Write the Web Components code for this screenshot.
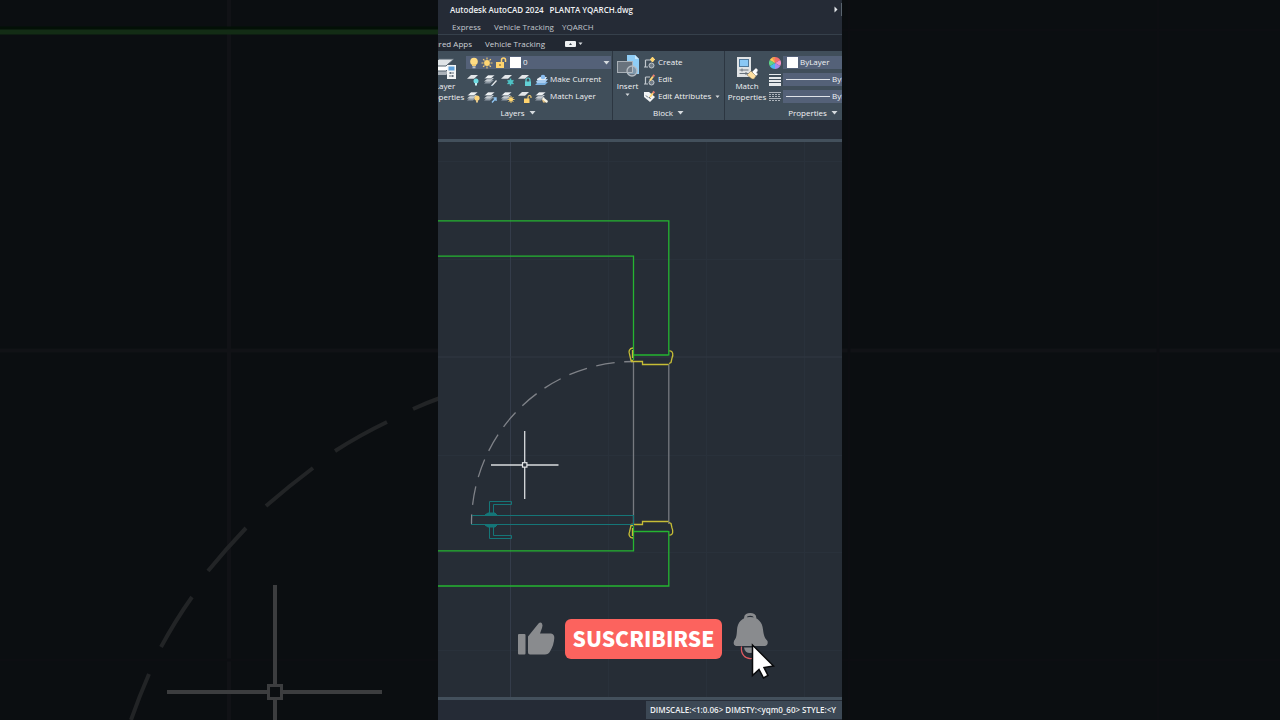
<!DOCTYPE html>
<html lang="en">
<head>
<meta charset="utf-8">
<title>Autodesk AutoCAD 2024 - PLANTA YQARCH.dwg</title>
<style>
  html, body { margin: 0; background: #0b0e11; }
  body { font: 8px/11px "Open Sans", "Noto Sans", sans-serif; color: #f0f2f4; }
</style>
</head>
<body>
<video-stage>
  <cad-window>
    <title-bar slot="top"></title-bar>
    <menu-tabs slot="top"></menu-tabs>
    <ribbon-tabs slot="top"></ribbon-tabs>
    <cad-ribbon slot="top">
      <layers-panel></layers-panel>
      <block-panel></block-panel>
      <properties-panel></properties-panel>
    </cad-ribbon>
    <plan-canvas><subscribe-bar></subscribe-bar></plan-canvas>
    <status-bar slot="bottom">DIMSCALE:&lt;1:0.06&gt; DIMSTY:&lt;yqm0_60&gt; STYLE:&lt;Y</status-bar>
  </cad-window>
</video-stage>

<script>
const define = (name, html) => {
  const tpl = document.createElement('template');
  tpl.innerHTML = html;
  customElements.define(name, class extends HTMLElement {
    constructor() {
      super();
      this.attachShadow({ mode: 'open' }).append(tpl.content.cloneNode(true));
    }
  });
};

/* ---------- icons ---------- */
const sheets = `<path fill="#8d98a3" d="M1 10.500l4-3.500h6l-4 3.500z"/><path fill="#c4cad0" d="M1 8.500l4-3.500h6l-4 3.500z"/><path fill="#eef1f3" stroke="#404e5a" stroke-width=".6" d="M1 5.700L5 2h7L8 5.700z"/>`;
const sheet = `<path fill="#e3e6e9" d="M1 5.800L5 2h7L8 5.800z"/>`;
const padlock = (c) => `<path d="M9 9V7a2 2 0 0 1 4 0v2" fill="none" stroke="${c}" stroke-width="1.200"/><rect x="8" y="8.500" width="6" height="4.500" fill="${c}"/>`;
const ICONS = {
  bulb: [14, 14, `<circle cx="8" cy="5.500" r="3.800" fill="#ffdc83"/><path fill="#f4cd71" d="M6 8h4v2H6z"/><path fill="#b9bec4" d="M6.500 10.300h3v2h-3z"/>`],
  sun: [14, 14, `<circle cx="7" cy="7" r="2.900" fill="#ffd673"/><path stroke="#f5cd70" stroke-width="1.100" d="M7 1.500v2M7 10.500v2M1.500 7h2M10.500 7h2M3.100 3.100l1.400 1.400M9.500 9.500l1.400 1.400M3.100 10.900l1.400-1.400M9.500 4.500l1.400-1.400"/>`],
  unlock: [14, 14, `<path d="M7.500 7V4a2 2 0 0 1 4 0v2" fill="none" stroke="#ffd36e" stroke-width="1.500"/><rect x="2" y="6" width="8" height="6" fill="#ffd36e"/><path stroke="#6b5a35" d="M6 8v2"/>`],
  white: [14, 14, `<rect x="2" y="1" width="11" height="11" fill="#fff"/>`],
  layOff: [16, 14, sheet + `<circle cx="10" cy="8" r="2.500" fill="#6fdbe2"/><path fill="#c9edf0" d="M9 10h2v2.500H9z"/>`],
  layIso: [16, 14, sheets + `<path stroke="#e5e8ea" stroke-width="1.300" d="M9 12.500l4.500-5"/><path stroke="#9fb6ca" d="M8 12.500h2"/>`],
  layFreeze: [16, 14, sheet + `<circle cx="10.500" cy="9" r="2.300" fill="#46b3b7"/><path stroke="#4fc3c6" stroke-width="1.500" d="M10.500 5.500v7M7.500 7.300l6 3.500M7.500 10.800l6-3.500"/>`],
  layLock: [16, 14, sheet + padlock('#62d0d6')],
  layCurrent: [16, 14, `<path fill="#78aede" d="M1 12l3-3h10l-3 3z"/><path fill="#a9cdf0" d="M2 8.500L5 6h9l-3 4H3z"/><path fill="#e7eef4" d="M3 6l3-2h7l-2 3H3z"/><circle cx="9" cy="4" r="2.300" fill="#8abdf0"/>`],
  layOn: [16, 14, sheets + `<circle cx="11" cy="8" r="2.600" fill="#ffd67a"/><path fill="#e6c789" d="M10 10h2v2.500h-2z"/>`],
  layUniso: [16, 14, sheets + `<path stroke="#8fc4f2" stroke-width="1.400" d="M9 12.500l4-4.500M10.500 8H13v3"/>`],
  layThaw: [16, 14, sheets + `<circle cx="11" cy="9.500" r="2" fill="#ffd673"/><path stroke="#ffd673" stroke-width=".9" d="M11 6v7M7.500 9.500h7M8.500 7l5 5M8.500 12l5-5"/>`],
  layUnlock: [16, 14, sheet + `<path d="M11 9V7a1.500 1.500 0 0 1 3 0v1" fill="none" stroke="#ffd36e" stroke-width="1.100"/><rect x="7" y="8.500" width="5.500" height="4.500" fill="#ffd36e"/>`],
  layMatch: [16, 14, sheets + `<path fill="#f7f4e6" d="M9 7l5 4-1 2-5-3z"/><path fill="#e8c27c" d="M8 9l4 3.500H9z"/>`],
  layerProps: [30, 25, `<path fill="#aab1b8" d="M1 20l7-6h15l-7 6z"/><path fill="#fff" stroke="#53606c" d="M1 16l8-6h14l-7 6z"/><path fill="#dfe3e6" stroke="#53606c" d="M1 11l8-7h15l-8 7z"/><rect x="17" y="10" width="9" height="14" fill="#f3f5f6"/><rect x="18.500" y="11.500" width="6" height="4" fill="#5e9fd8"/><path stroke="#67737e" d="M19 18h5M19 21h5M20.500 17v2M22.500 20v2"/>`],
  insert: [24, 25, `<path fill="#8fcdf5" d="M11 0h8l4 4v15H11z"/><path fill="#c7e7fb" d="M19 0v4h4z"/><rect x="1.500" y="6.500" width="15" height="11" fill="#69737d" stroke="#a9b0b7"/><circle cx="16" cy="16" r="5" fill="#77828d" fill-opacity=".7" stroke="#b5bcc3" stroke-width="1.300"/><path fill="none" stroke="#b5bcc3" d="M11.500 17.500h5v-6"/>`],
  create: [16, 14, `<path fill="none" stroke="#c2c8ce" stroke-width="1.200" d="M3.500 4v6.500M3.500 4H9M2 11h4"/><circle cx="9.500" cy="9.500" r="2.500" fill="#717c87" stroke="#c2c8ce"/><path stroke="#ffd673" stroke-width="1.200" d="M10.500 1v5M8 3.500h5M9 2l3 3M12 2L9 5"/>`],
  edit: [16, 14, `<path fill="none" stroke="#c2c8ce" stroke-width="1.200" d="M3.500 4v6.500M3.500 4H8M2 11h4"/><circle cx="9.500" cy="9.500" r="2.500" fill="#717c87" stroke="#c2c8ce"/><path stroke="#ffd673" stroke-width="2" d="M8 7.500l3-4"/><path stroke="#ef7d72" stroke-width="2" d="M11 3.500L12.300 2"/>`],
  editAttr: [16, 14, `<path fill="#f1f3f4" d="M2 2h5l6 5-5 5-6-5z"/><path stroke="#58646f" d="M4 5.500l2 2M7 7l1.500 2"/><path stroke="#ffd673" stroke-width="2" d="M8 7l3-4"/><path stroke="#ef7d72" stroke-width="2" d="M11 3L12.300 1.500"/>`],
  matchProps: [24, 25, `<rect x="2" y="2" width="14" height="20" fill="#e0e3e5"/><rect x="4.500" y="4.500" width="9" height="7" fill="#8ac8f5" stroke="#4f7798"/><path stroke="#68737d" d="M4.500 15h9M4.500 18.500h9M7 13.500v3M11 17v3"/><path fill="#fff" stroke="#8a8d90" stroke-width=".5" d="M17 17l4-4 2 2-1.500 3 1.500 1-3 3z"/><path fill="#ffe0a0" stroke="#6d6553" stroke-width=".5" d="M12 20l4-4 5 5-2 3h-2z"/>`],
  wheel: [12, 14, `<g transform="translate(6 7)"><path fill="#f46d6d" d="M0 0V-6A6 6 0 0 1 5.200-3z"/><path fill="#f58fc5" d="M0 0L5.200-3A6 6 0 0 1 5.200 3z"/><path fill="#a58af0" d="M0 0L5.200 3A6 6 0 0 1 0 6z"/><path fill="#4bb8ee" d="M0 0V6A6 6 0 0 1-5.200 3z"/><path fill="#5fd487" d="M0 0L-5.200 3A6 6 0 0 1-5.200-3z"/><path fill="#f9cb59" d="M0 0L-5.200-3A6 6 0 0 1 0-6z"/><path fill="#f4924d" d="M0 0L-3-5.200A6 6 0 0 1 0-6z"/></g>`],
  weights: [12, 14, `<path fill="#e6e9eb" d="M0 1h12v1H0zM0 4h12v2H0zM0 7h12v2H0zM0 10h12v3H0z"/>`],
  types: [12, 14, `<path stroke="#aeb5bc" d="M0 2.500h12M0 8.500h12"/><path stroke="#aeb5bc" stroke-dasharray="2 1" d="M0 4.500h12M0 6.500h12M0 10.500h12"/>`],
  line: [46, 14, `<path stroke="#dfe3e8" d="M1 6.500h44"/>`],
  down: [7, 5, `<path fill="#d5dade" d="M.500 1h6l-3 3.500z"/>`],
  downSmall: [5, 4, `<path fill="#d5dade" d="M.500.500h4l-2 2.500z"/>`],
  right: [4, 7, `<path fill="#e4e7ea" d="M.500.500v6l3-3z"/>`],
  panelToggle: [11, 6, `<rect width="11" height="6" rx="1" fill="#eef0f2"/><path fill="#3a434d" d="M4 4h3L5.500 2z"/>`]
};
customElements.define('cad-icon', class extends HTMLElement {
  constructor() {
    super();
    this.attachShadow({ mode: 'open' });
  }
  connectedCallback() {
    const [w, h, body] = ICONS[this.getAttribute('name')];
    this.shadowRoot.innerHTML = `<style>:host{display:block;flex:none}svg{display:block}</style>
      <svg width="${w}" height="${h}" viewBox="0 0 ${w} ${h}" aria-hidden="true">${body}</svg>`;
  }
});

const RESET = `button,select{font:inherit;color:inherit;background:none;border:0;padding:0;margin:0;appearance:none;white-space:nowrap;cursor:pointer}
  a{color:inherit;text-decoration:none;white-space:nowrap}`;

/* ---------- page frame and enlarged backdrop ---------- */
define('video-stage', `<style>
  :host { display: grid; grid-template-columns: minmax(0,1fr) minmax(0,404px) minmax(0,1fr); min-height: 100vh; position: relative; overflow: hidden; }
  .backdrop { position: absolute; inset: 0; width: 100%; height: 100%; }
  ::slotted(*) { grid-column: 2; position: relative; }
</style>
<svg class="backdrop" viewBox="0 0 1280 720" preserveAspectRatio="xMidYMid slice" fill="none" aria-hidden="true">
  <path stroke="#111216" stroke-width="4" d="M229 0v720M0 350.500h1280"/>
  <path stroke="#0d0e12" stroke-width="3" d="M849 0v720M1158 0v720M842 30h438M0 660h1280"/>
  <path stroke="#031006" stroke-width="3" d="M0 28h440"/>
  <path stroke="#132c15" stroke-width="5" d="M0 32h440"/>
  <path stroke="#222426" stroke-width="4" d="M440 398Q426 403 413 409M387 422Q360 435 335 451M313 468Q289 486 266 506M246 528Q226 549 208 571M192 597Q175 621 161 647M149 674Q139 697 131 720"/>
  <path stroke="#3c3d3f" stroke-width="4" d="M167 692h100M283 692h99M275 585v99M275 700v20"/>
  <rect x="268.500" y="685.500" width="13" height="13" stroke="#3c3d3f" stroke-width="3"/>
</svg>
<slot></slot>`);

define('cad-window', `<style>
  :host { display: flex; flex-direction: column; background: #252b36; overflow: hidden; }
  .drawing { flex: 1; display: flex; flex-direction: column; border: solid #43505c; border-width: 3px 0; margin-top: 19px; }
  .drawing ::slotted(*) { flex: 1; }
</style>
<slot name="top"></slot><div class="drawing"><slot></slot></div><slot name="bottom"></slot>`);

define('title-bar', `<style>
  :host { display: flex; align-items: center; height: 19px; padding-left: 12px; font-weight: 600; white-space: nowrap; }
  span { margin-right: 6px; } cad-icon { margin-left: auto; } i { width: 1px; height: 13px; margin-left: 3px; background: #5a646f; }
</style><span>Autodesk AutoCAD 2024</span><span>PLANTA YQARCH.dwg</span><cad-icon name="right"></cad-icon><i></i>`);

define('menu-tabs', `<style>${RESET}
  :host { display: flex; align-items: center; height: 15px; padding-left: 14px; border-bottom: 1px solid #36404b; color: #c2c7cd; }
  .vehicle { margin: 0 8px 0 13px; }
</style><a href="#express">Express</a><a class="vehicle" href="#vehicle">Vehicle Tracking</a><a href="#yqarch">YQARCH</a>`);

define('ribbon-tabs', `<style>${RESET}
  :host { display: flex; align-items: center; height: 16px; background: #222832; color: #cdd2d7; }
  .featured { width: 34px; display: flex; justify-content: flex-end; }
  .vehicle { margin: 0 20px 0 13px; } button { display: flex; align-items: center; gap: 2px; padding-top: 2px; }
</style><a class="featured" href="#apps">Featured Apps</a><a class="vehicle" href="#tracking">Vehicle Tracking</a>
<button aria-label="Minimize ribbon"><cad-icon name="panelToggle"></cad-icon><cad-icon name="downSmall"></cad-icon></button>`);

/* ---------- ribbon ---------- */
define('cad-ribbon', `<style>
  :host { display: flex; height: 69px; margin-left: -14px; background: #404e5a; }
  ::slotted(*) { flex: none; }
</style><slot></slot>`);

const PANEL = `<style>${RESET}
  :host { display: flex; flex-direction: column; box-sizing: border-box; border-right: 1px solid #2c3641; }
  .body { display: flex; height: 54px; }
  .title { display: flex; align-items: center; justify-content: center; gap: 4px; height: 15px; }
  .big { display: flex; flex-direction: column; align-items: center; padding-top: 4px; line-height: 11px; flex: none; }
  .rows { display: flex; flex-direction: column; gap: 4px; padding-top: 5px; }
  .row, .combo, .cmd { display: flex; align-items: flex-start; height: 13px; }
  .row { gap: 1px; }
  .combo { background: #546178; overflow: hidden; } select { flex: 1; min-width: 0; height: 11px; text-align: left; }
</style>`;

define('layers-panel', PANEL + `<style>:host { width: 189px; } .big { width: 42px; } .combo { width: 145px; }
  .combo select { margin-left: 1px; } .combo cad-icon:last-child { margin: 4px 1px 0 0; }</style>
<div class="body">
  <button class="big"><cad-icon name="layerProps"></cad-icon><span>Layer</span><span>Properties</span></button>
  <div class="rows">
    <div class="combo"><cad-icon name="bulb"></cad-icon><cad-icon name="sun"></cad-icon><cad-icon name="unlock"></cad-icon><cad-icon name="white"></cad-icon><select aria-label="Layer"><option>0</option></select><cad-icon name="down"></cad-icon></div>
    <div class="row"><button aria-label="Off"><cad-icon name="layOff"></cad-icon></button><button aria-label="Isolate"><cad-icon name="layIso"></cad-icon></button><button aria-label="Freeze"><cad-icon name="layFreeze"></cad-icon></button><button aria-label="Lock"><cad-icon name="layLock"></cad-icon></button><button class="cmd"><cad-icon name="layCurrent"></cad-icon>Make Current</button></div>
    <div class="row"><button aria-label="Turn all layers on"><cad-icon name="layOn"></cad-icon></button><button aria-label="Unisolate"><cad-icon name="layUniso"></cad-icon></button><button aria-label="Thaw all"><cad-icon name="layThaw"></cad-icon></button><button aria-label="Unlock"><cad-icon name="layUnlock"></cad-icon></button><button class="cmd"><cad-icon name="layMatch"></cad-icon>Match Layer</button></div>
  </div>
</div>
<button class="title">Layers<cad-icon name="down"></cad-icon></button>`);

define('block-panel', PANEL + `<style>:host { width: 112px; } .big { width: 29px; } .big cad-icon:last-child { margin-top: 2px; } .more { margin: 5px 0 0 4px; }</style>
<div class="body">
  <button class="big"><cad-icon name="insert"></cad-icon><span>Insert</span><cad-icon name="downSmall"></cad-icon></button>
  <div class="rows">
    <div class="row"><button class="cmd"><cad-icon name="create"></cad-icon>Create</button></div>
    <div class="row"><button class="cmd"><cad-icon name="edit"></cad-icon>Edit</button></div>
    <div class="row"><button class="cmd"><cad-icon name="editAttr"></cad-icon>Edit Attributes<cad-icon class="more" name="downSmall"></cad-icon></button></div>
  </div>
</div>
<button class="title">Block<cad-icon name="down"></cad-icon></button>`);

define('properties-panel', PANEL + `<style>:host { width: 177px; } .big { width: 44px; } .row { gap: 2px; } .combo { width: 113px; padding-left: 2px; box-sizing: border-box; gap: 1px; }</style>
<div class="body">
  <button class="big"><cad-icon name="matchProps"></cad-icon><span>Match</span><span>Properties</span></button>
  <div class="rows">
    <div class="row"><cad-icon name="wheel"></cad-icon><div class="combo"><cad-icon name="white"></cad-icon><select aria-label="Color"><option>ByLayer</option></select></div></div>
    <div class="row"><cad-icon name="weights"></cad-icon><div class="combo"><cad-icon name="line"></cad-icon><select aria-label="Lineweight"><option>ByLayer</option></select></div></div>
    <div class="row"><cad-icon name="types"></cad-icon><div class="combo"><cad-icon name="line"></cad-icon><select aria-label="Linetype"><option>ByLayer</option></select></div></div>
  </div>
</div>
<button class="title">Properties<cad-icon name="down"></cad-icon></button>`);

/* ---------- floor plan ---------- */
const frame = `<path d="M633 348C629 348 628.500 352 629.500 354L631 360.500H633M632.500 350V358"/><path d="M631 361.500H642.500V364.500H668.500"/><path d="M669.500 351C673 350.500 673.500 355 672 358L671 362.500L669 363.500"/>`;
const handle = `<path d="M489.500 513.500V501.500H511.500V504.500H493.500V513.500"/><path fill="#157678" d="M485 515l3-2h7l2 2z"/>`;
define('plan-canvas', `<style>
  :host { display: flex; position: relative; background: #262d36; overflow: hidden; }
  svg { position: absolute; inset: 0; width: 100%; height: 100%; }
  ::slotted(*) { position: absolute; left: 0; right: 0; bottom: 28px; }
</style>
<svg viewBox="438 142 404 555" preserveAspectRatio="xMidYMid slice" fill="none" role="img" aria-label="Floor plan of a door">
  <path stroke="#29313b" d="M608.500 142v555M706.500 142v555M804.500 142v555M438 161.500h404M438 259.500h404M438 455.500h404M438 552.500h404M438 650.500h404"/>
  <path stroke="#343c4a" d="M510.500 142v555"/><path stroke="#303843" d="M438 357h404"/>
  <path stroke="#777a80" stroke-width="1.300" d="M633.500 361v163M668.800 364v160"/>
  <path stroke="#7f8288" stroke-width="1.300" stroke-dasharray="18.700 9.580" stroke-dashoffset="9.350" d="M633.500 361.500A162 162 0 0 0 471.500 523.500"/>
  <g stroke="#25b531" stroke-width="1.300"><path d="M438 220.900H668.800V355.500M438 256.200H633.500V360M633.500 355H668.500"/><path d="M438 550.900H633.500V526M438 586H668.800V531M633.500 531.500H668.500"/></g>
  <g stroke="#c6bd36" stroke-width="1.300">${frame}<g transform="matrix(1 0 0 -1 0 886)">${frame}</g></g>
  <g stroke="#157678"><rect x="471.500" y="515.500" width="162" height="9"/>${handle}<g transform="matrix(1 0 0 -1 0 1040)">${handle}</g></g>
  <path stroke="#858990" d="M471.500 515v9"/>
  <path stroke="#d9dbde" stroke-width="1.300" d="M491 465h31M527 465h31.500M524.700 431v31M524.700 467v32"/><rect x="522.500" y="462.700" width="4.400" height="4.400" stroke="#e5e7e9" stroke-width="1.200"/>
</svg><slot></slot>`);

define('subscribe-bar', `<style>${RESET}
  :host { display: flex; align-items: center; justify-content: center; gap: 10px; padding-left: 14px; }
  .icon { display: block; } svg { display: block; overflow: visible; }
  .subscribe { width: 157px; height: 40px; padding-bottom: 2px; border-radius: 6px; background: #fc635e; color: #fff; font: 900 21px/38px "Noto Sans CJK SC", "Open Sans", sans-serif; text-align: center; }
</style>
<button class="icon" aria-label="Me gusta"><svg width="37" height="34" viewBox="518 622 37 34" fill="#898b8e"><path d="M519 634h5.500q1 0 1 1v18.500q0 1-1 1H519q-1 0-1-1V635q0-1 1-1z"/><path d="M528 636.500L538.500 623.500Q540.500 621.300 542 623.500Q543 625 542 628L540 633.500H551Q554.500 634 554.300 638Q554 645 550 651.500Q548.500 654.500 545 654.500H530Q528 654.500 528 652.500z"/></svg></button>
<button class="subscribe">SUSCRIBIRSE</button>
<button class="icon" aria-label="Notificaciones"><svg width="44" height="60" viewBox="732 609 44 60"><path fill="none" stroke="#898b8e" stroke-width="2.800" d="M745.500 619v-1.500a4.700 3.200 0 0 1 9.400 0v1.500"/><path fill="#898b8e" d="M750 617C742 617 737.500 622.500 737 630C736.700 636 736 638.500 734.200 640.500Q732.500 645.500 736 646H764.500Q768.500 645.500 767.500 641C764.500 638 763.700 635 763 629.500C762.500 622.500 758 617 750 617z"/><path fill="#898b8e" d="M744 647.500h12q-1 5.500-6 5.500t-6-5.500z"/><path fill="none" stroke="#df5a60" stroke-width="1.200" d="M741.500 646.500C740.500 654 745 659.500 752 658.500"/><path fill="#fff" stroke="#08090b" stroke-width="1.500" d="M752.500 645V675.500L759 669.500L763.500 678L768 675.500L764 667.500L773.500 666z"/></svg></button>`);

define('status-bar', `<style>
  :host { display: flex; justify-content: flex-end; height: 20px; font-weight: 600; }
  span { box-sizing: border-box; width: 196px; margin: 1px 0; padding-left: 4px; line-height: 18px; background: #3c4855; white-space: nowrap; overflow: hidden; }
</style><span><slot></slot></span>`);
</script>
</body>
</html>
